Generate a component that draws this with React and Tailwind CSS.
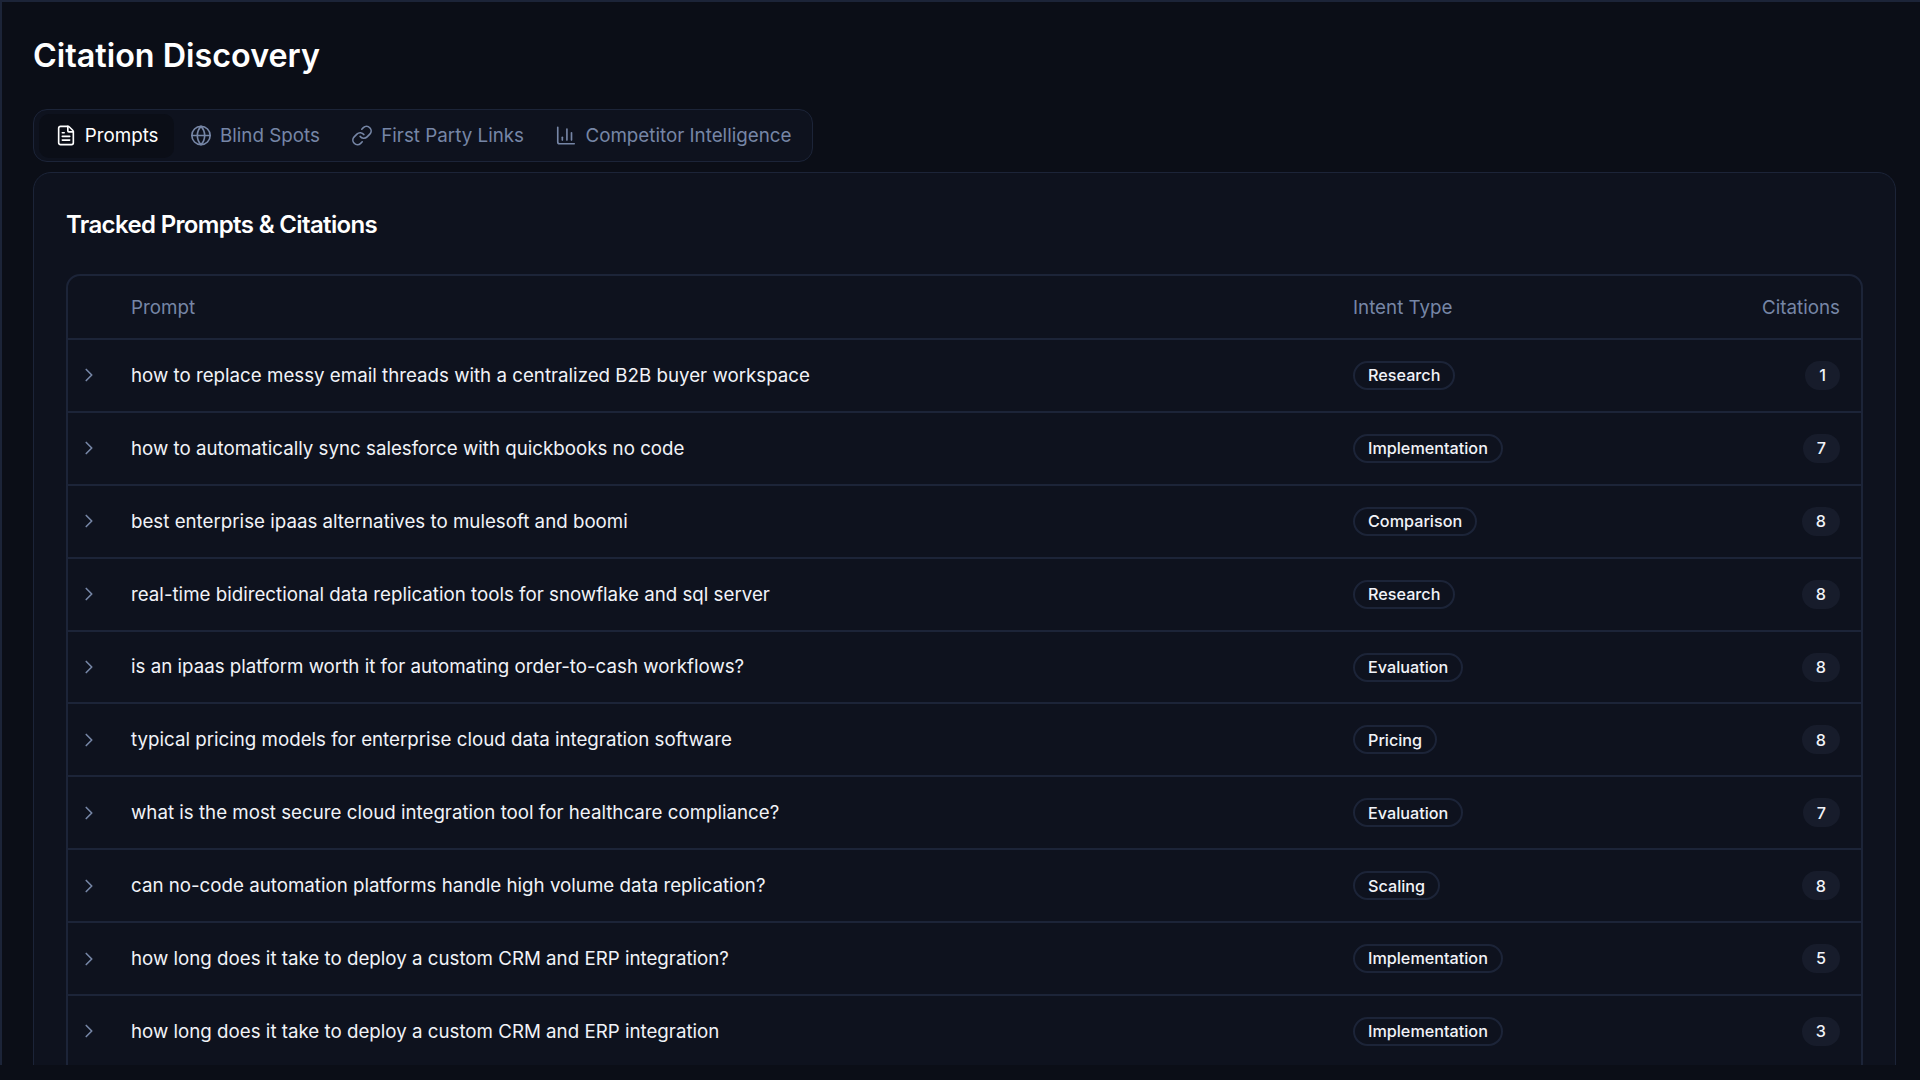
import React from 'react';
import { ChevronRight, FileText, Globe, Link, ChartColumn } from 'lucide-react';

const rows = [
  ['how to replace messy email threads with a centralized B2B buyer workspace', 'Research', 1],
  ['how to automatically sync salesforce with quickbooks no code', 'Implementation', 7],
  ['best enterprise ipaas alternatives to mulesoft and boomi', 'Comparison', 8],
  ['real-time bidirectional data replication tools for snowflake and sql server', 'Research', 8],
  ['is an ipaas platform worth it for automating order-to-cash workflows?', 'Evaluation', 8],
  ['typical pricing models for enterprise cloud data integration software', 'Pricing', 8],
  ['what is the most secure cloud integration tool for healthcare compliance?', 'Evaluation', 7],
  ['can no-code automation platforms handle high volume data replication?', 'Scaling', 8],
  ['how long does it take to deploy a custom CRM and ERP integration?', 'Implementation', 5],
  ['how long does it take to deploy a custom CRM and ERP integration', 'Implementation', 3],
];

const tabs = [
  { name: 'Prompts', icon: FileText, active: true },
  { name: 'Blind Spots', icon: Globe },
  { name: 'First Party Links', icon: Link },
  { name: 'Competitor Intelligence', icon: ChartColumn },
];

const App = () => {
  return (
    <div className="min-h-[1080px] bg-[#0b0e17] font-['Inter',sans-serif]">
      <div className="h-[1065px] overflow-hidden border-t-2 border-l-2 border-[#1c2438] pt-[34px] pr-[24px] pl-[31px]">
        <h1 className="text-[32.3px] leading-[40px] font-semibold text-white">Citation Discovery</h1>

        <div className="mt-[33px] inline-flex h-[53px] items-center rounded-[14px] border border-[#1c2438] bg-[#0e121e] px-[5px]">
          {tabs.map((tab) => (
            <div
              key={tab.name}
              className={`flex h-[44px] items-center gap-[8px] rounded-[10px] px-[15.7px] text-[18.8px] ${tab.active ? 'bg-[#0b0e17] text-white' : 'text-[#7686a6]'}`}
            >
              <tab.icon size={22} strokeWidth={1.8} className="-translate-y-[0.5px]" />
              <span className="translate-y-[0.5px]">{tab.name}</span>
            </div>
          ))}
        </div>

        <div className="mt-[10px] rounded-t-[18px] border border-[#1c2438] bg-[#0e121e] px-[32px] pt-[36px]">
          <h2 className="text-[24px] leading-[32px] font-semibold tracking-[-0.65px] text-white">Tracked Prompts &amp; Citations</h2>

          <div className="mt-[33px] rounded-t-[14px] border-2 border-[#1c2438]">
            <div className="grid h-[64px] grid-cols-[63px_1fr_220.5px_266.5px] items-center border-b-2 border-[#1c2438] pt-[2px] pr-[21px] text-[18.8px] text-[#7686a6]">
              <div />
              <div>Prompt</div>
              <div>Intent Type</div>
              <div className="text-right">Citations</div>
            </div>
            {rows.map(([prompt, intent, count], i) => (
              <div key={i} className="grid h-[72.9px] grid-cols-[63px_1fr_220.5px_266.5px] items-center border-b-2 border-[#1c2438] pr-[21px]">
                <div className="pl-[10px]">
                  <ChevronRight size={22} strokeWidth={1.8} className="text-[#7686a6]" />
                </div>
                <div className="pt-[1px] text-[18.73px] text-[#f1f3f8]">{prompt}</div>
                <div>
                  <span className="inline-flex h-[29px] items-center rounded-full border-2 border-[#1c2438] px-[13px] text-[16.2px] font-medium text-[#f1f3f8]">{intent}</span>
                </div>
                <div className="flex justify-end">
                  <span className="inline-flex h-[29px] items-center rounded-full bg-[#171c2b] px-[14px] text-[16.2px] font-medium text-[#f1f3f8]">{count}</span>
                </div>
              </div>
            ))}
          </div>
        </div>
      </div>
    </div>
  );
};

export default App;
